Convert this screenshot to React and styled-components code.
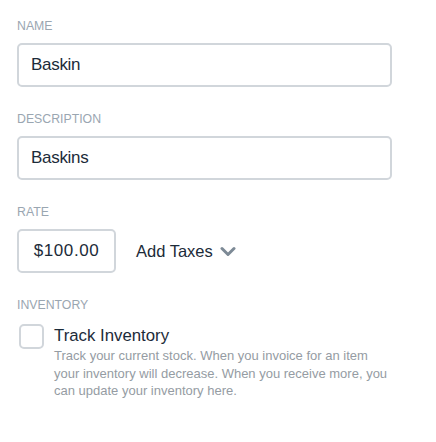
import React from 'react';
import styled, { createGlobalStyle } from 'styled-components';

const GlobalStyle = createGlobalStyle`
	body {
		margin: 0;
		background: #fff;
		font-family: "Liberation Sans", Arial, sans-serif;
	}
`;

const colors = {
	label: '#9aa6b1',
	text: '#1c2b39',
	border: '#d1d6db',
	muted: '#959ca3',
	chevron: '#7d8a96'
};

const Form = styled.div`
	width: 375px;
	padding: 20px 0 0 17px;
`;

const Group = styled.div`
	display: flex;
	flex-direction: column;
	margin-bottom: ${props => props.last ? 0 : 26}px;
`;

const Label = styled.label`
	font-size: 12.3px;
	line-height: 13px;
	color: ${colors.label};
	text-transform: uppercase;
	margin-bottom: ${props => props.gap || 10}px;
`;

const Input = styled.input`
	box-sizing: border-box;
	width: ${props => props.width || '375px'};
	height: 44px;
	border: 2px solid ${colors.border};
	border-radius: 5px;
	padding: 0 ${props => props.center ? 0 : 12}px;
	text-align: ${props => props.center ? 'center' : 'left'};
	font-family: inherit;
	font-size: 17px;
	letter-spacing: ${props => props.spacing || '-0.3px'};
	color: ${colors.text};
	outline: none;
	background: #fff;
`;

const RateRow = styled.div`
	display: flex;
	align-items: center;
	gap: 20px;
`;

const TaxButton = styled.button`
	display: flex;
	align-items: center;
	gap: 7px;
	border: none;
	background: none;
	padding: 0;
	font-family: inherit;
	font-size: 16.5px;
	color: ${colors.text};
	cursor: pointer;
`;

const CheckRow = styled.div`
	display: flex;
	align-items: flex-start;
	gap: 10px;
	padding-left: 2px;
`;

const Box = styled.span`
	box-sizing: border-box;
	flex: none;
	width: 25px;
	height: 25px;
	border: 2px solid ${colors.border};
	border-radius: 5px;
`;

const CheckText = styled.div`
	display: flex;
	flex-direction: column;
	padding-top: 2px;
`;

const CheckTitle = styled.span`
	font-size: 16.8px;
	line-height: 20px;
	color: ${colors.text};
`;

const Help = styled.p`
	margin: 1px 0 0;
	width: 340px;
	font-size: 13px;
	line-height: 17.5px;
	color: ${colors.muted};
`;

const Chevron = () => (
	<svg width="16" height="11" viewBox="0 0 16 11" fill="none">
		<path d="M2 2.5 L8 8.5 L14 2.5" stroke={colors.chevron} strokeWidth="3" strokeLinecap="round" strokeLinejoin="round" />
	</svg>
);

export default function App() {
	return (
		<>
			<GlobalStyle />
			<Form>
				<Group>
					<Label>Name</Label>
					<Input defaultValue="Baskin" />
				</Group>
				<Group>
					<Label>Description</Label>
					<Input defaultValue="Baskins" />
				</Group>
				<Group>
					<Label>Rate</Label>
					<RateRow>
						<Input width="99px" center spacing="0.6px" defaultValue="$100.00" />
						<TaxButton>Add Taxes <Chevron /></TaxButton>
					</RateRow>
				</Group>
				<Group last>
					<Label gap={12}>Inventory</Label>
					<CheckRow>
						<Box />
						<CheckText>
							<CheckTitle>Track Inventory</CheckTitle>
							<Help>Track your current stock. When you invoice for an item your inventory will decrease. When you receive more, you can update your inventory here.</Help>
						</CheckText>
					</CheckRow>
				</Group>
			</Form>
		</>
	);
}
